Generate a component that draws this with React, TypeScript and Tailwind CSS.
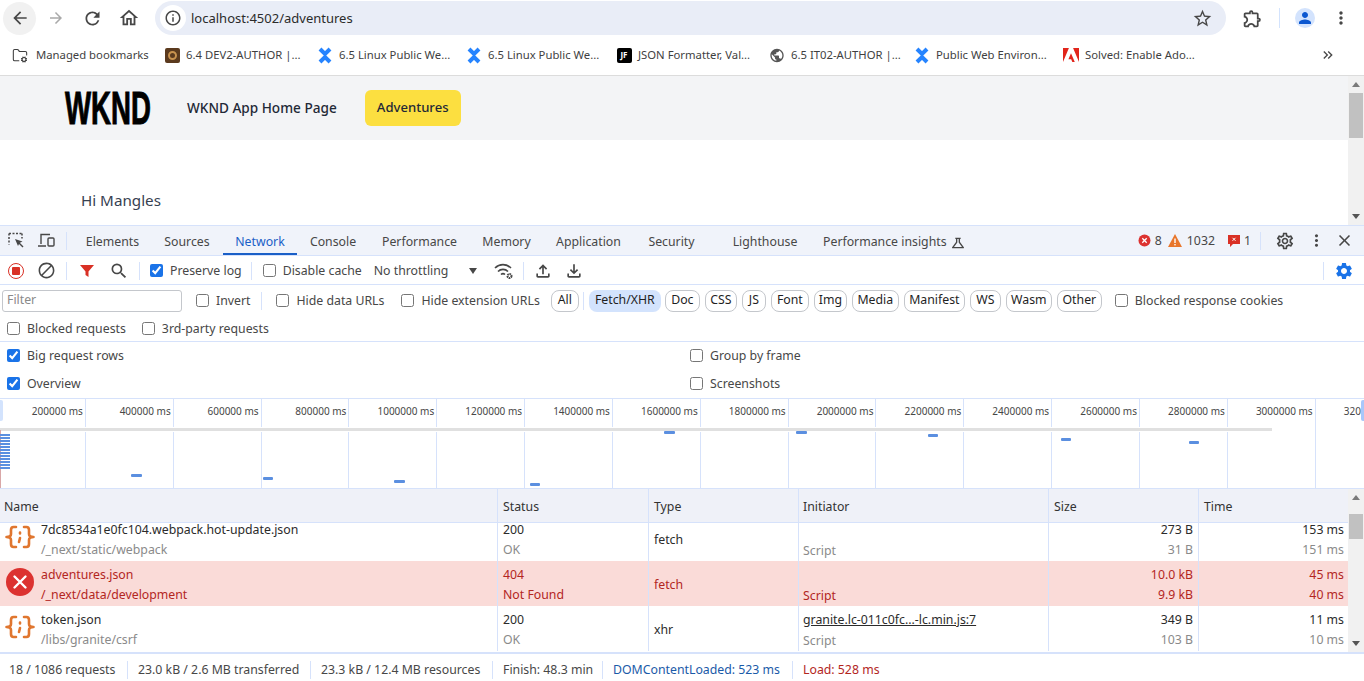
import { ReactNode } from 'react';
import {
  MdArrowBack,
  MdArrowForward,
  MdBlock,
  MdClose,
  MdInfoOutline,
  MdKeyboardDoubleArrowRight,
  MdMoreVert,
  MdOutlineExtension,
  MdOutlineFileDownload,
  MdOutlineFileUpload,
  MdOutlineHome,
  MdOutlineScience,
  MdOutlineSettings,
  MdPerson,
  MdPublic,
  MdRefresh,
  MdSearch,
  MdSettings,
  MdStarBorder,
} from 'react-icons/md';
import { FolderCog } from 'lucide-react';

const tabs = [
  { label: 'Elements', width: 'w-[77px]' },
  { label: 'Sources', width: 'w-[72px]' },
  { label: 'Network', width: 'w-[74px]', active: true },
  { label: 'Console', width: 'w-[72px]' },
  { label: 'Performance', width: 'w-[101px]' },
  { label: 'Memory', width: 'w-[73px]' },
  { label: 'Application', width: 'w-[91px]' },
  { label: 'Security', width: 'w-[75px]' },
  { label: 'Lighthouse', width: 'w-[112px]' },
];

const pills = [
  { label: 'Doc', width: 'w-[35px]' },
  { label: 'CSS', width: 'w-[32px]' },
  { label: 'JS', width: 'w-[24px]' },
  { label: 'Font', width: 'w-[38px]' },
  { label: 'Img', width: 'w-[33px]' },
  { label: 'Media', width: 'w-[47px]' },
  { label: 'Manifest', width: 'w-[61px]' },
  { label: 'WS', width: 'w-[31px]' },
  { label: 'Wasm', width: 'w-[46px]' },
  { label: 'Other', width: 'w-[45px]' },
];

const ticks = [
  '',
  '200000 ms',
  '400000 ms',
  '600000 ms',
  '800000 ms',
  '1000000 ms',
  '1200000 ms',
  '1400000 ms',
  '1600000 ms',
  '1800000 ms',
  '2000000 ms',
  '2200000 ms',
  '2400000 ms',
  '2600000 ms',
  '2800000 ms',
  '3000000 ms',
  '3200000 ms',
];

// x, y, width of the timeline dashes, read off the overview strip
const dashes = [
  [131, 474, 11],
  [263, 477, 10],
  [394, 480, 11],
  [530, 483, 10],
  [664, 431, 11],
  [796, 431, 11],
  [928, 434, 10],
  [1061, 438, 10],
  [1189, 441, 10],
];

const requests = [
  {
    name: '7dc8534a1e0fc104.webpack.hot-update.json',
    path: '/_next/static/webpack',
    status: '200',
    statusText: 'OK',
    type: 'fetch',
    size: '273 B',
    resource: '31 B',
    time: '153 ms',
    latency: '151 ms',
  },
  {
    name: 'adventures.json',
    path: '/_next/data/development',
    status: '404',
    statusText: 'Not Found',
    type: 'fetch',
    size: '10.0 kB',
    resource: '9.9 kB',
    time: '45 ms',
    latency: '40 ms',
    failed: true,
  },
  {
    name: 'token.json',
    path: '/libs/granite/csrf',
    status: '200',
    statusText: 'OK',
    type: 'xhr',
    initiator: 'granite.lc-011c0fc...-lc.min.js:7',
    size: '349 B',
    resource: '103 B',
    time: '11 ms',
    latency: '10 ms',
  },
];

function JsonIcon() {
  return (
    <svg width="30" height="30" viewBox="0 0 30 30" fill="none" stroke="#e0762f" strokeWidth="2.6" strokeLinecap="round" strokeLinejoin="round">
      <path d="M11 5H8.500C6.500 5 6 6.500 6 8v4c0 2-1.500 3-4.500 3 3 0 4.500 1 4.500 3v4c0 1.500.5 3 2.500 3H11" />
      <path d="M19 5h2.500C23.500 5 24 6.500 24 8v4c0 2 1.500 3 4.500 3-3 0-4.500 1-4.500 3v4c0 1.500-.5 3-2.500 3H19" />
      <path d="M15 10.500v1M15 16l-1 4" />
    </svg>
  );
}

function ErrorIcon() {
  return (
    <svg width="30" height="30" viewBox="0 0 30 30">
      <circle cx="15" cy="15" r="14" fill="#dc3230" />
      <path d="M9.500 9.500l11 11M20.500 9.500l-11 11" stroke="#fff" strokeWidth="2.400" strokeLinecap="round" />
    </svg>
  );
}

function StackIcon() {
  return (
    <svg width="17" height="17" viewBox="0 0 16 16" fill="none" stroke="#2684ff" strokeWidth="4">
      <path d="M3 1.500L8 6.500L13 1.500" />
      <path d="M3 14.500L8 9.500L13 14.500" />
    </svg>
  );
}

function AdobeIcon() {
  return (
    <svg width="16" height="16" viewBox="0 0 24 24" fill="#e1251b">
      <path d="M13.966 22.624l-1.690-4.281H8.122l3.892-9.144 5.662 13.425zM8.884 1.376H0v21.248zm6.232 0H24v21.248z" />
    </svg>
  );
}

function ThrottleIcon() {
  return (
    <svg width="20" height="18" viewBox="0 0 20 18" fill="none" stroke="#474747" strokeWidth="1.600">
      <path d="M1 6c4.500-4.500 11.500-4.500 16 0M4 9.500c2.800-2.800 7.200-2.800 10 0M7 12.500c1.300-1.200 2.700-1.200 4 0" />
      <circle cx="15.500" cy="14" r="2" strokeWidth="2" strokeDasharray="1.500 0.600" />
    </svg>
  );
}

function Bookmark({
  icon,
  label,
  width,
  gap = 'gap-[6px]',
}: {
  icon: ReactNode;
  label: string;
  width: string;
  gap?: string;
}) {
  return (
    <div className={`flex items-center ${gap} ${width}`}>
      <span className="flex w-[16px] shrink-0 justify-center">{icon}</span>
      <span className="whitespace-nowrap">{label}</span>
    </div>
  );
}

function Check({ label, checked, className = '' }: { label: string; checked?: boolean; className?: string }) {
  return (
    <label className={`flex items-center gap-[7px] whitespace-nowrap ${className}`}>
      <input type="checkbox" defaultChecked={checked} className="h-[13px] w-[13px] accent-[#1a73e8]" />
      <span className="pt-[2px]">{label}</span>
    </label>
  );
}

function Sep({ className = '' }: { className?: string }) {
  return <div className={`h-[18px] w-px bg-[#d6e2fb] ${className}`} />;
}

function ScrollArrows() {
  return (
    <>
      <svg className="absolute left-[4px] top-[5px]" width="8" height="6" viewBox="0 0 8 6">
        <polygon points="4,1 8,6 0,6" fill="#7a7a7a" />
      </svg>
      <svg className="absolute bottom-[5px] left-[4px]" width="8" height="6" viewBox="0 0 8 6">
        <polygon points="0,0 8,0 4,5" fill="#555" />
      </svg>
    </>
  );
}

function BrowserBar() {
  return (
    <>
      <div className="flex h-[36px] items-center text-[#474747]">
        <div className="ml-[3px] flex h-[33px] w-[33px] items-center justify-center rounded-full bg-[#f1f1f1]">
          <MdArrowBack size={20} />
        </div>
        <MdArrowForward size={18} className="ml-[11px] text-[#a9a9a9]" />
        <MdRefresh size={21} className="ml-[17px]" />
        <MdOutlineHome size={22} className="ml-[15px]" />
        <div className="ml-[15px] flex h-[34px] w-[1071px] items-center rounded-full bg-[#e9edf7] pl-[5px] pr-[13px]">
          <div className="flex h-[26px] w-[26px] items-center justify-center rounded-full bg-white">
            <MdInfoOutline size={18} />
          </div>
          <span className="ml-[5px] pt-[1px] text-[13px] text-[#2b2b2b]">localhost:4502/adventures</span>
          <MdStarBorder size={21} className="ml-auto" />
        </div>
        <MdOutlineExtension size={21} className="ml-[16px]" />
        <div className="ml-[16px] h-[20px] w-px bg-[#d3e3fd]" />
        <div className="ml-[15px] flex h-[20px] w-[20px] items-center justify-center rounded-full bg-[#d3e3fd]">
          <MdPerson size={18} className="text-[#0b57d0]" />
        </div>
        <MdMoreVert size={20} className="ml-[16px]" />
      </div>
      <div className="flex h-[40px] items-center border-b border-[#dcdcdc] pb-[1px] pl-[12px] text-[11.3px] text-[#3f3f3f]">
        <Bookmark width="w-[152px]" gap="gap-[8px]" label="Managed bookmarks" icon={<FolderCog size={17} strokeWidth={1.6} />} />
        <Bookmark
          width="w-[153px]"
          label="6.4 DEV2-AUTHOR |..."
          icon={
            <span className="flex h-[15px] w-[15px] items-center justify-center rounded-[2px] bg-[#5b3a1e]">
              <span className="h-[9px] w-[9px] rounded-full border-2 border-[#c9934f]" />
            </span>
          }
        />
        <Bookmark width="w-[149px]" label="6.5 Linux Public We..." icon={<StackIcon />} />
        <Bookmark width="w-[150px]" label="6.5 Linux Public We..." icon={<StackIcon />} />
        <Bookmark
          width="w-[153px]"
          label="JSON Formatter, Val..."
          icon={
            <span className="flex h-[15px] w-[15px] items-center justify-center rounded-[2px] bg-black text-[8px] font-bold text-white">
              JF
            </span>
          }
        />
        <Bookmark width="w-[145px]" label="6.5 IT02-AUTHOR |..." icon={<MdPublic size={17} className="text-[#555]" />} />
        <Bookmark width="w-[149px]" label="Public Web Environ..." icon={<StackIcon />} />
        <Bookmark width="w-[257px]" label="Solved: Enable Ado..." icon={<AdobeIcon />} />
        <MdKeyboardDoubleArrowRight size={16} className="text-[#474747]" />
      </div>
    </>
  );
}

function PageView() {
  return (
    <div className="flex h-[149px]">
      <div className="flex-1 overflow-hidden">
        <div className="flex h-[64px] items-center bg-[#f3f4f6] pl-[65px]">
          <div className="w-[86px]">
            <div className="origin-left scale-x-[0.6] whitespace-nowrap font-['Liberation_Sans',sans-serif] text-[46px] font-bold leading-none text-black [-webkit-text-stroke:1px_black]">
              WKND
            </div>
          </div>
          <span className="ml-[36px] text-[13.6px] font-medium text-[#1f2937]">WKND App Home Page</span>
          <div className="ml-[28px] flex h-[36px] w-[96px] items-center justify-center rounded-[6px] bg-[#fcdf40] text-[13.1px] font-medium text-[#1f2937]">
            Adventures
          </div>
        </div>
        <p className="pl-[81px] pt-[48px] text-[15.2px] leading-[24px] text-[#374151]">Hi Mangles</p>
      </div>
      <div className="relative w-[16px] bg-[#f1f1f1]">
        <ScrollArrows />
        <div className="mx-auto mt-[17px] h-[45px] w-[14px] bg-[#c1c1c1]" />
      </div>
    </div>
  );
}

function DevtoolsTabs() {
  return (
    <div className="flex h-[31px] items-center border-y border-[#d6e2fb] bg-[#f0f3fa] text-[#474747]">
      <svg className="ml-[8px]" width="17" height="17" viewBox="0 0 17 17" fill="none" stroke="#474747" strokeWidth="1.500">
        <path d="M1 1.500h13M1 1.500v11M14 1.500v5" strokeDasharray="2 1.500" />
        <path d="M7 7l7.500 2.500-3 1.500-1.500 3z" fill="#474747" stroke="none" />
        <path d="M11 11l4 4" />
      </svg>
      <svg className="ml-[13px]" width="17" height="17" viewBox="0 0 17 17" fill="none" stroke="#474747" strokeWidth="1.400">
        <path d="M3 12V2.500h9M0 14h8" />
        <rect x="10" y="6" width="6" height="8" rx="1" />
      </svg>
      <div className="ml-[11px] mr-[7px] h-[18px] w-px bg-[#d6e2fb]" />
      {tabs.map((tab) => (
        <div
          key={tab.label}
          className={`flex h-full items-center justify-center ${tab.width} ${
            tab.active ? 'border-b-2 border-[#1a5fc7] pt-[6px] text-[#1a5fc7]' : 'pt-[4px]'
          }`}
        >
          {tab.label}
        </div>
      ))}
      <div className="flex h-full items-center gap-[3px] pl-[2px] pt-[4px]">
        Performance insights
        <MdOutlineScience size={16} />
      </div>
      <div className="ml-auto flex items-center">
        <svg width="13" height="13" viewBox="0 0 13 13">
          <circle cx="6.500" cy="6.500" r="6" fill="#dc3230" />
          <path d="M4.300 4.300l4.400 4.400M8.700 4.300l-4.400 4.400" stroke="#fff" strokeWidth="1.300" />
        </svg>
        <span className="ml-[4px] pt-[2px]">8</span>
        <svg className="ml-[6px]" width="14" height="13" viewBox="0 0 14 13">
          <polygon points="7,0 14,13 0,13" fill="#e8762c" />
          <rect x="6.300" y="4.500" width="1.400" height="4.500" fill="#fff" />
          <rect x="6.300" y="10" width="1.400" height="1.400" fill="#fff" />
        </svg>
        <span className="ml-[5px] pt-[2px]">1032</span>
        <svg className="ml-[13px]" width="12" height="13" viewBox="0 0 12 13">
          <path d="M0 1h12v9H5l-3 3v-3H0z" fill="#d93025" />
          <path d="M4.500 3.800l3 3M7.500 3.800l-3 3" stroke="#fff" strokeWidth="1" />
        </svg>
        <span className="ml-[4px] pt-[2px]">1</span>
        <div className="ml-[9px] h-[18px] w-px bg-[#d6e2fb]" />
        <MdOutlineSettings size={20} className="ml-[14px]" />
        <MdMoreVert size={19} className="ml-[12px]" />
        <MdClose size={19} className="ml-[9px] mr-[10px]" />
      </div>
    </div>
  );
}

function NetworkToolbar() {
  return (
    <div className="flex h-[29px] items-center border-b border-[#d6e2fb] pt-[1px] text-[#474747]">
      <div className="ml-[8px] flex h-[16px] w-[16px] items-center justify-center rounded-full border-[1.5px] border-[#d93025]">
        <div className="h-[8px] w-[8px] rounded-[1px] bg-[#d93025]" />
      </div>
      <MdBlock size={19} className="ml-[13px]" />
      <Sep className="ml-[10px]" />
      <svg className="ml-[13px]" width="14" height="14" viewBox="0 0 14 14">
        <path d="M0 1h14L8.500 7.500V13L5.500 11V7.500z" fill="#d93025" />
      </svg>
      <MdSearch size={20} className="ml-[15px]" />
      <Sep className="ml-[10px]" />
      <Check label="Preserve log" checked className="ml-[10px]" />
      <Sep className="ml-[9px]" />
      <Check label="Disable cache" className="ml-[11px]" />
      <span className="ml-[12px] w-[95px] whitespace-nowrap pt-[2px]">No throttling</span>
      <svg width="8" height="6" viewBox="0 0 8 6">
        <polygon points="0,0 8,0 4,6" fill="#474747" />
      </svg>
      <span className="ml-[17px]">
        <ThrottleIcon />
      </span>
      <Sep className="ml-[9px]" />
      <MdOutlineFileUpload size={20} className="ml-[9px]" />
      <MdOutlineFileDownload size={20} className="ml-[11px]" />
      <Sep className="ml-auto" />
      <MdSettings size={20} className="ml-[10px] mr-[10px] text-[#1a73e8]" />
    </div>
  );
}

function FilterRows() {
  return (
    <div className="text-[#474747]">
      <div className="flex h-[30px] items-center pl-[2px] pt-[1px]">
        <div className="flex h-[22px] w-[180px] items-center rounded-[3px] border border-[#c4c7cc] pl-[4px] text-[#8a8a8a]">
          Filter
        </div>
        <Check label="Invert" className="ml-[14px]" />
        <Sep className="ml-[11px]" />
        <Check label="Hide data URLs" className="ml-[14px]" />
        <Check label="Hide extension URLs" className="ml-[17px]" />
        <div className="ml-[11px] flex h-[22px] w-[28px] items-center justify-center rounded-[8px] border border-[#c4c7cc] text-[#1f1f1f]">
          All
        </div>
        <Sep className="ml-[4px]" />
        <div className="ml-[5px] flex h-[22px] w-[72px] items-center justify-center rounded-[8px] bg-[#d3e3fd] text-[#1f1f1f]">
          Fetch/XHR
        </div>
        <div className="ml-[4px] flex gap-[5px]">
          {pills.map((pill) => (
            <div
              key={pill.label}
              className={`flex h-[22px] items-center justify-center rounded-[8px] border border-[#c4c7cc] text-[#1f1f1f] ${pill.width}`}
            >
              {pill.label}
            </div>
          ))}
        </div>
        <Check label="Blocked response cookies" className="ml-[13px]" />
      </div>
      <div className="flex h-[27px] items-center border-b border-[#d6e2fb] pl-[7px]">
        <Check label="Blocked requests" />
        <Check label="3rd-party requests" className="ml-[16px]" />
      </div>
      <div className="grid h-[57px] grid-cols-[683px_1fr] grid-rows-[27px_29px] items-center border-b border-[#d6e2fb] pl-[7px]">
        <Check label="Big request rows" checked />
        <Check label="Group by frame" />
        <Check label="Overview" checked />
        <Check label="Screenshots" />
      </div>
    </div>
  );
}

function Overview() {
  return (
    <div className="relative h-[90px] overflow-hidden border-b border-[#d6e2fb] text-[10px] text-[#474747]">
      <div className="ml-[-89.850px] flex h-full w-[1600px]">
        {ticks.map((tick) => (
          <div key={tick} className="h-full w-[87.850px] shrink-0 border-r border-[#d6e2fb] pr-[2px] pt-[4px] text-right leading-[16px]">
            {tick}
          </div>
        ))}
      </div>
      <div className="absolute left-0 top-[28px] h-[5px] w-[1272px] border-y border-white bg-[#e0e0e0]" />
      <div className="absolute left-0 top-[31px] h-[58px] w-px bg-[#d9a7a7]" />
      <div className="absolute left-0 top-[35px] flex w-[10px] flex-col gap-[1px]">
        {[0, 1, 2, 3, 4, 5, 6, 7, 8, 9, 10, 11].map((i) => (
          <div key={i} className="h-[2px] bg-[#5b8fe0]" />
        ))}
      </div>
      {dashes.map(([x, y, w]) => (
        <div
          key={x}
          className="absolute h-[3px] rounded-[1px] bg-[#5b8fe0]"
          style={{ left: x, top: y - 399, width: w }}
        />
      ))}
      <div className="absolute left-0 top-[1px] h-[21px] w-[3px] rounded-r-[2px] bg-[#d3e3fd]" />
      <div className="absolute right-0 top-[1px] h-[21px] w-[3px] rounded-l-[2px] bg-[#a8c7fa]" />
    </div>
  );
}

function RequestTable() {
  const cols = 'grid grid-cols-[498px_151px_150px_250px_150px_149px]';
  const cell = 'border-r border-[#d6e2fb]';
  return (
    <div className="flex h-[165px] border-b-2 border-[#d6e2fb]">
      <div className="w-[1348px]">
        <div className={`${cols} h-[34px] items-center border-b border-[#d6e2fb] bg-[#eff1f8] text-[#333]`}>
          <div className={`${cell} flex h-full items-center pl-[4px] pt-[3px]`}>Name</div>
          <div className={`${cell} flex h-full items-center pl-[5px] pt-[3px]`}>Status</div>
          <div className={`${cell} flex h-full items-center pl-[5px] pt-[3px]`}>Type</div>
          <div className={`${cell} flex h-full items-center pl-[4px] pt-[3px]`}>Initiator</div>
          <div className={`${cell} flex h-full items-center pl-[5px] pt-[3px]`}>Size</div>
          <div className="flex h-full items-center pl-[5px] pt-[3px]">Time</div>
        </div>
        <div className="h-[129px] overflow-hidden">
          <div className="mt-[-7px]">
            {requests.map((r) => {
              const main = r.failed ? 'text-[#b3261e]' : 'text-[#2b2b2b]';
              const sub = r.failed ? 'text-[#b3261e]' : 'text-[#8a8a8a]';
              return (
                <div key={r.name} className={`${cols} h-[45px] leading-[20px] ${r.failed ? 'bg-[#fadbd8]' : 'bg-white'}`}>
                  <div className={`${cell} flex items-center`}>
                    <span className="ml-[5px] w-[36px] shrink-0 pb-[3px]">{r.failed ? <ErrorIcon /> : <JsonIcon />}</span>
                    <div className="pt-[3px]">
                      <div className={main}>{r.name}</div>
                      <div className={sub}>{r.path}</div>
                    </div>
                  </div>
                  <div className={`${cell} pl-[5px] pt-[4px]`}>
                    <div className={main}>{r.status}</div>
                    <div className={sub}>{r.statusText}</div>
                  </div>
                  <div className={`${cell} flex items-center pl-[5px] pt-[3px] ${main}`}>{r.type}</div>
                  <div className={`${cell} pl-[4px] pt-[4px]`}>
                    <div className={`h-[20px] ${main} ${r.initiator ? 'underline' : ''}`}>{r.initiator}</div>
                    <div className={`mt-[1px] ${sub}`}>Script</div>
                  </div>
                  <div className={`${cell} pr-[5px] pt-[4px] text-right`}>
                    <div className={main}>{r.size}</div>
                    <div className={sub}>{r.resource}</div>
                  </div>
                  <div className="pr-[4px] pt-[4px] text-right">
                    <div className={main}>{r.time}</div>
                    <div className={sub}>{r.latency}</div>
                  </div>
                </div>
              );
            })}
          </div>
        </div>
      </div>
      <div className="relative w-[16px] bg-[#f1f1f1]">
        <ScrollArrows />
        <div className="mx-auto mt-[25px] h-[25px] w-[14px] bg-[#c1c1c1]" />
      </div>
    </div>
  );
}

function StatusBar() {
  return (
    <div className="flex h-[27px] items-center pt-[5px] text-[#474747]">
      <span className="w-[127px] whitespace-nowrap pl-[9px]">18 / 1086 requests</span>
      <Sep />
      <span className="w-[182px] whitespace-nowrap pl-[10px]">23.0 kB / 2.6 MB transferred</span>
      <Sep />
      <span className="w-[181px] whitespace-nowrap pl-[10px]">23.3 kB / 12.4 MB resources</span>
      <Sep />
      <span className="w-[109px] whitespace-nowrap pl-[10px]">Finish: 48.3 min</span>
      <Sep />
      <span className="w-[189px] whitespace-nowrap pl-[10px] text-[#1a5aa8]">DOMContentLoaded: 523 ms</span>
      <Sep />
      <span className="whitespace-nowrap pl-[10px] text-[#b3261e]">Load: 528 ms</span>
    </div>
  );
}

export default function App() {
  return (
    <div className="h-[681px] overflow-hidden bg-white font-['Noto_Sans',sans-serif] text-[12.3px]">
      <BrowserBar />
      <PageView />
      <DevtoolsTabs />
      <NetworkToolbar />
      <FilterRows />
      <Overview />
      <RequestTable />
      <StatusBar />
    </div>
  );
}
